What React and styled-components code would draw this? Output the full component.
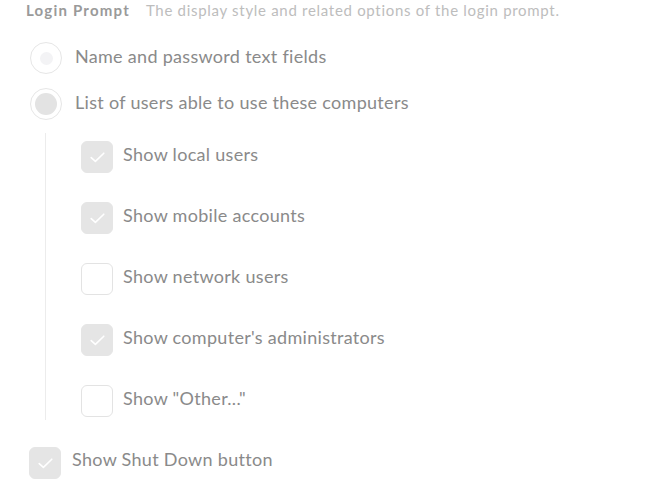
import styled, { createGlobalStyle } from 'styled-components';

const GlobalStyle = createGlobalStyle`
    body {
        margin: 0;
        background: #fff;
        font-family: Lato, "Open Sans", sans-serif;
    }
`

const Page = styled.div`
    display: flex;
    flex-direction: column;
    padding: 1px 0 0 26px;
    width: 662px;
    height: 492px;
    box-sizing: border-box;
`

const Header = styled.div`
    display: flex;
    align-items: baseline;
    gap: 16px;
    height: 20px;
`

const Title = styled.span`
    font-size: 15px;
    font-weight: 700;
    color: #9a9a9a;
    letter-spacing: 1.2px;
`

const Description = styled.span`
    font-size: 15px;
    color: #bdbdbd;
    letter-spacing: 0.7px;
`

const RadioGroup = styled.div`
    display: flex;
    flex-direction: column;
    gap: 14px;
    margin: 21px 0 0 4px;
`

const Row = styled.label`
    display: flex;
    align-items: center;
    gap: ${p => p.$gap || 13}px;
    font-size: 18px;
    letter-spacing: 0.3px;
    color: #8a8a8a;
`

const RadioOuter = styled.span`
    width: 30px;
    height: 30px;
    border: 1px solid #e6e6e6;
    border-radius: 50%;
    display: flex;
    align-items: center;
    justify-content: center;
    flex-shrink: 0;
`

const RadioDot = styled.span`
    width: ${p => (p.$selected ? 22 : 13)}px;
    height: ${p => (p.$selected ? 22 : 13)}px;
    border-radius: 50%;
    background: ${p => (p.$selected ? '#e3e3e3' : '#f3f3f5')};
`

const Nested = styled.div`
    display: flex;
    flex-direction: column;
    gap: 29px;
    margin: 13px 0 0 19px;
    padding: 8px 0 3px 35px;
    border-left: 1px solid #ececec;
`

const Box = styled.span`
    width: 32px;
    height: 32px;
    box-sizing: border-box;
    border-radius: 6px;
    flex-shrink: 0;
    display: flex;
    align-items: center;
    justify-content: center;
    background: ${p => (p.$checked ? '#e5e5e5' : '#fff')};
    border: 1px solid ${p => (p.$checked ? '#e5e5e5' : '#e3e3e3')};
`

const RowText = styled.span`
    margin-top: ${p => p.$lift || -6}px;
`

const Footer = styled.div`
    margin: 27px 0 0 3px;
`

function Check ({ checked }) {
    return (
        <Box $checked={checked}>
            {checked && (
                <svg width="15" height="11" viewBox="0 0 15 11" fill="none">
                    <path d="M1.2 5.6 L5.4 9.4 L13.8 1.2" stroke="#fff" strokeWidth="1.6" strokeLinecap="round" strokeLinejoin="round" />
                </svg>
            )}
        </Box>
    )
}

const options = [
    { label: 'Show local users', checked: true },
    { label: 'Show mobile accounts', checked: true },
    { label: 'Show network users', checked: false },
    { label: "Show computer's administrators", checked: true },
    { label: 'Show "Other..."', checked: false },
]

export default function App () {
    return (
        <>
            <GlobalStyle />
            <Page>
                <Header>
                    <Title>Login Prompt</Title>
                    <Description>The display style and related options of the login prompt.</Description>
                </Header>
                <RadioGroup>
                    <Row>
                        <RadioOuter><RadioDot /></RadioOuter>
                        <RowText $lift={-4}>Name and password text fields</RowText>
                    </Row>
                    <Row>
                        <RadioOuter><RadioDot $selected /></RadioOuter>
                        <RowText $lift={-4}>List of users able to use these computers</RowText>
                    </Row>
                </RadioGroup>
                <Nested>
                    {options.map(o => (
                        <Row key={o.label} $gap={10}>
                            <Check checked={o.checked} />
                            <RowText>{o.label}</RowText>
                        </Row>
                    ))}
                </Nested>
                <Footer>
                    <Row $gap={11}>
                        <Check checked />
                        <RowText $lift={-8}>Show Shut Down button</RowText>
                    </Row>
                </Footer>
            </Page>
        </>
    )
}
